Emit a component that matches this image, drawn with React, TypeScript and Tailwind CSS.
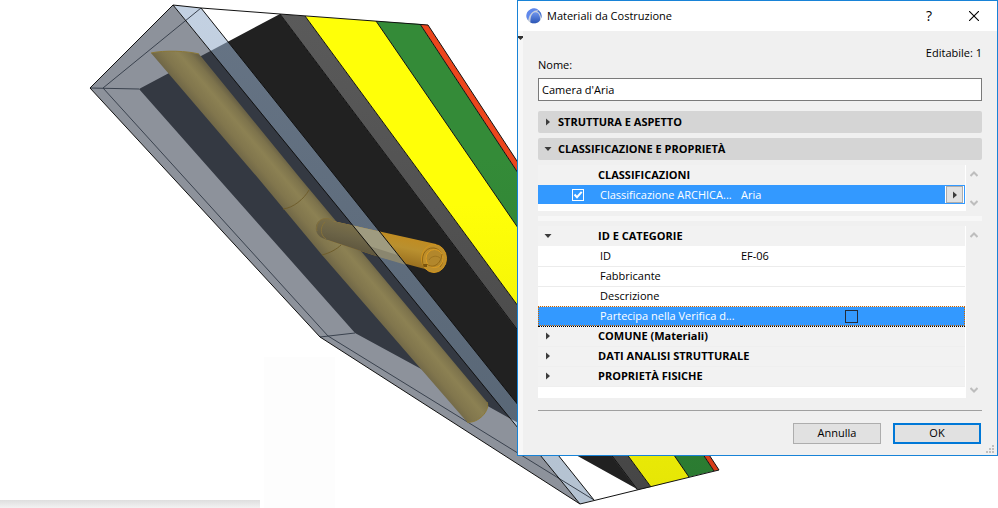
import { useState } from "react"

interface ArrowProps {
  open?: boolean
}

interface PropertyRow {
  id: string
  label: string
  value: string
}

const properties: PropertyRow[] = [
  { id: "id", label: "ID", value: "EF-06" },
  { id: "maker", label: "Fabbricante", value: "" },
  { id: "description", label: "Descrizione", value: "" }
]

const groups = ["COMUNE (Materiali)", "DATI ANALISI STRUTTURALE", "PROPRIETÀ FISICHE"]

function Arrow({ open }: ArrowProps) {
  return (
    <svg viewBox="0 0 8 8" className="block h-2 w-2 shrink-0" aria-hidden="true">
      <path d={open ? "M0.5 2h7L4 6z" : "M2 0.5v7L6 4z"} fill="#3c3c3c" />
    </svg>
  )
}

function Chevron({ down }: { down?: boolean }) {
  return (
    <svg viewBox="0 0 8 8" className="block h-2 w-2" aria-hidden="true">
      <path d={down ? "M0.5 2L4 5.5L7.5 2" : "M0.5 6L4 2.5L7.5 6"} fill="none" stroke="#bdbdbd" strokeWidth="2" />
    </svg>
  )
}

function Scroller() {
  return (
    <div className="flex w-4 flex-col items-center justify-between pt-1 pb-[3px]">
      <button type="button" aria-label="Su" className="py-px"><Chevron /></button>
      <button type="button" aria-label="Giù" className="py-px"><Chevron down /></button>
    </div>
  )
}

function Logo() {
  return (
    <svg viewBox="0 0 16 16" className="h-4 w-4" aria-hidden="true">
      <defs>
        <linearGradient id="logo" x1="0" y1="0" x2="0" y2="1">
          <stop offset="0" stopColor="#6f95ee" />
          <stop offset="1" stopColor="#2b55b4" />
        </linearGradient>
      </defs>
      <circle cx="8" cy="8" r="7.6" fill="#c9d0dd" />
      <path d="M0.6 9.5A7.500 7.500 0 0 1 13 2.400C8 1.800 3.500 5 2.200 12.400A7 7 0 0 1 0.600 9.500z" fill="#5f88ec" />
      <path d="M4.400 14.400C4.200 8.500 6 4.600 9.300 4.200C12.500 4 14.200 7.500 14.200 12.200A7.600 7.600 0 0 1 4.400 14.400z" fill="url(#logo)" />
      <path d="M12.600 2.200A7.600 7.600 0 0 1 15.200 10.500C14.900 7 13.600 4.600 11.200 3.200z" fill="#4672d2" />
    </svg>
  )
}

function WallModel() {
  return (
    <svg viewBox="0 0 998 508" className="block h-auto w-full" role="img" aria-label="Modello 3D">
      <defs>
        <linearGradient id="pipe" gradientUnits="userSpaceOnUse" x1="242" y1="160" x2="268" y2="138">
          <stop offset="0" stopColor="#706747" />
          <stop offset="0.25" stopColor="#81764d" />
          <stop offset="0.6" stopColor="#8c8153" />
          <stop offset="0.85" stopColor="#7d734c" />
          <stop offset="1" stopColor="#696145" />
        </linearGradient>
        <linearGradient id="branch" gradientUnits="userSpaceOnUse" x1="384" y1="232" x2="378" y2="258">
          <stop offset="0" stopColor="#c08c22" />
          <stop offset="0.4" stopColor="#b9902f" />
          <stop offset="1" stopColor="#9a7020" />
        </linearGradient>
        <linearGradient id="branchDark" gradientUnits="userSpaceOnUse" x1="350" y1="224" x2="344" y2="248">
          <stop offset="0" stopColor="#7a6f49" />
          <stop offset="0.5" stopColor="#6c6447" />
          <stop offset="1" stopColor="#5f573e" />
        </linearGradient>
        <linearGradient id="yellow" x1="0" y1="0" x2="0" y2="1">
          <stop offset="0.4" stopColor="#ffff08" />
          <stop offset="1" stopColor="#e6e606" />
        </linearGradient>
        <linearGradient id="green" x1="0" y1="0" x2="0" y2="1">
          <stop offset="0.3" stopColor="#348b38" />
          <stop offset="1" stopColor="#2b7b31" />
        </linearGradient>
        <linearGradient id="red" x1="0" y1="0" x2="0" y2="1">
          <stop offset="0.3" stopColor="#ec461c" />
          <stop offset="1" stopColor="#d83c18" />
        </linearGradient>
        <linearGradient id="grey" x1="0" y1="0" x2="0" y2="1">
          <stop offset="0" stopColor="#5a5a5a" />
          <stop offset="1" stopColor="#464646" />
        </linearGradient>
        <linearGradient id="strip" x1="0" y1="0" x2="0" y2="1">
          <stop offset="0" stopColor="#98b0cd" />
          <stop offset="1" stopColor="#7e96b0" />
        </linearGradient>
        <linearGradient id="floor" x1="0" y1="0" x2="0" y2="1">
          <stop offset="0" stopColor="#dedede" />
          <stop offset="1" stopColor="#f2f2f2" />
        </linearGradient>
        <clipPath id="behindGlass">
          <path d="M173 5L580 504H200V5z" />
        </clipPath>
        <clipPath id="insideStrip">
          <path d="M173 5L201 8L594 500L580 504z" />
        </clipPath>
      </defs>

      <rect x="0" y="500" width="260" height="8" fill="url(#floor)" />
      <rect x="264" y="357" width="71" height="151" fill="#fdfdfd" />

      {/* wall layers */}
      <path d="M280 14L139 89L355 333L423 370L637 489z" fill="#212121" />
      <path d="M280 14L305 16L651 487L637 490z" fill="url(#grey)" />
      <path d="M305 16L376 21L689 477L651 487z" fill="url(#yellow)" />
      <path d="M376 21L420 24L714 471L689 477z" fill="url(#green)" />
      <path d="M420 24L428 25L719 470L714 471z" fill="url(#red)" />

      {/* air gap */}
      <path d="M90 88L173 5L580 504L320 337z" fill="#414958" fillOpacity="0.6" />
      <path d="M173 5L201 8L594 500L580 504z" fill="url(#strip)" fillOpacity="0.58" />
      <path
        d="M201 8L103 88L328 336L594 500M90 88L139 89M320 337L355 333"
        fill="none"
        stroke="#3a424e"
        strokeWidth="1"
      />

      {/* main pipe */}
      <path d="M151 53C164 50 188 51 199 54L300 178L487 402C491 410 478 424 467 422L322 255L258 178z" fill="url(#pipe)" />
      <path d="M151 53C164 50 188 51 199 54M487 402C491 410 478 424 467 422" fill="none" stroke="#8b7837" strokeWidth="1" />
      <path d="M283 209C293 208 304 199 309 190M322 255C330 253 337 249 341 245" fill="none" stroke="#6f5d2c" strokeWidth="1" />

      {/* branch pipe */}
      <path d="M333 221L382 232L436 244V272L373 255L328 240z" fill="url(#branch)" />
      <g clipPath="url(#insideStrip)">
        <path d="M333 221L382 232L436 244V272L373 255L328 240z" fill="#9f9b80" />
        <path d="M328 240L373 255L423 270V263L328 233z" fill="#8a866f" />
      </g>
      <path
        d="M328 218C318 218 315 225 316 230C317 236 323 239 328 240L373 255L423 270V241L382 232L333 221z"
        fill="url(#branchDark)"
        clipPath="url(#behindGlass)"
      />
      <path d="M332 220C321 215 315 224 317 231M325 222C319 228 321 236 326 239" fill="none" stroke="#85713a" strokeWidth="1" />
      <ellipse cx="434" cy="258.500" rx="12.500" ry="14" fill="#bd8e2c" stroke="#d2951c" strokeWidth="1" />
      <path d="M424 267C420 258 424 247 434 248C443 249 445 262 440 267" fill="none" stroke="#946813" strokeWidth="1" />
      <ellipse cx="434.500" cy="258.500" rx="8.500" ry="9" fill="#b2872c" stroke="#dc9d22" strokeWidth="1" />
      <path d="M427 264C432 269 441 265 442 254" fill="none" stroke="#946813" strokeWidth="1" />
      <path d="M429 260C431 256 437 255 440 258" fill="none" stroke="#9d7420" strokeWidth="1" />
      <path d="M423 264h4v3h-3z" fill="#7a540e" />

      <path
        d="M90 88L173 5L201 8L280 14L428 25L719 470L637 490L580 504L320 337zM173 5L580 504M201 8L594 500M280 14L637 489M305 16L651 487M376 21L689 477M420 24L714 471"
        fill="none"
        stroke="#111"
        strokeWidth="1"
      />
    </svg>
  )
}

function ClassificationList() {
  const [checked, setChecked] = useState(true)

  return (
    <div className="mt-[5px] flex">
      <div className="flex-1 border-r border-white bg-white pb-[7px]">
        <table className="w-full table-fixed border-collapse">
          <colgroup>
            <col className="w-15" />
            <col className="w-[143px]" />
            <col />
          </colgroup>
          <tbody>
            <tr className="h-5 bg-[#f2f2f2]">
              <td />
              <th colSpan={2} className="p-0 text-left font-bold">CLASSIFICAZIONI</th>
            </tr>
            <tr className="h-[19px] bg-[#3399ff] text-white">
              <td className="p-0">
                <span className="ml-[34px] grid h-3 w-3">
                  <input
                    id="classification"
                    type="checkbox"
                    checked={checked}
                    onChange={e => setChecked(e.target.checked)}
                    className="col-start-1 row-start-1 h-3 w-3 appearance-none border border-white"
                  />
                  {checked && (
                    <svg viewBox="0 0 12 12" className="pointer-events-none col-start-1 row-start-1 h-3 w-3" aria-hidden="true">
                      <path d="M2.500 5.500L5 8.200L9.700 2.800" fill="none" stroke="#fff" strokeWidth="2" />
                    </svg>
                  )}
                </span>
              </td>
              <td className="p-0 pl-0.5 whitespace-nowrap">
                <label htmlFor="classification">Classificazione ARCHICA...</label>
              </td>
              <td className="p-0">
                <div className="flex items-center justify-between">
                  <span>Aria</span>
                  <span className="mr-px flex border-x border-white bg-white">
                    <button
                      type="button"
                      aria-label="Scegli classificazione"
                      className="flex h-[17px] w-[17px] items-center justify-center border border-[#adadad] bg-[#e1e1e1]"
                    >
                      <Arrow />
                    </button>
                  </span>
                </div>
              </td>
            </tr>
          </tbody>
        </table>
      </div>
      <Scroller />
    </div>
  )
}

function PropertyList() {
  const [collision, setCollision] = useState(false)

  return (
    <div className="mt-[5px] flex">
      <div className="flex-1 border-r border-white bg-white pb-[11px]">
        <table className="w-full table-fixed border-collapse">
          <colgroup>
            <col className="w-15" />
            <col className="w-[143px]" />
            <col />
          </colgroup>
          <tbody>
            <tr className="h-5 bg-[#f2f2f2]">
              <td className="p-0">
                <button type="button" aria-label="Chiudi gruppo" className="ml-1.5 block"><Arrow open /></button>
              </td>
              <th colSpan={2} className="p-0 text-left font-bold">ID E CATEGORIE</th>
            </tr>
            {properties.map(row => (
              <tr key={row.id} className="h-5 border-b border-[#ececec]">
                <td />
                <td className="p-0 pl-0.5">{row.label}</td>
                <td className="p-0">{row.value}</td>
              </tr>
            ))}
            <tr className="h-5 border-b border-dotted border-black bg-[#3399ff] text-white outline-1 -outline-offset-1 outline-dotted outline-[#cc6600]">
              <td />
              <td className="p-0 pl-0.5 whitespace-nowrap">
                <label htmlFor="collision">Partecipa nella Verifica d...</label>
              </td>
              <td className="p-0 pr-1">
                <input
                  id="collision"
                  type="checkbox"
                  checked={collision}
                  onChange={e => setCollision(e.target.checked)}
                  className="mx-auto block h-[13px] w-[13px] appearance-none border border-[#222c3a] checked:bg-[#222c3a]"
                />
              </td>
            </tr>
            {groups.map(name => (
              <tr key={name} className="h-5 border-b border-[#efefef] bg-[#f2f2f2]">
                <td className="p-0">
                  <button type="button" aria-label={name} className="ml-1.5 block"><Arrow /></button>
                </td>
                <th colSpan={2} className="p-0 text-left font-bold">{name}</th>
              </tr>
            ))}
          </tbody>
        </table>
      </div>
      <Scroller />
    </div>
  )
}

function MaterialDialog() {
  const [name, setName] = useState("Camera d'Aria")

  return (
    <section
      role="dialog"
      aria-labelledby="dialog-title"
      className="absolute top-0 right-0 w-[481px] border border-[#1883d7] bg-[#f0f0f0]"
    >
      <header className="flex h-[30px] items-center bg-white pr-[17px] pl-2">
        <Logo />
        <h1 id="dialog-title" className="ml-[5px] flex-1">Materiali da Costruzione</h1>
        <button type="button" aria-label="Aiuto" className="mr-9 text-[14px]">?</button>
        <button type="button" aria-label="Chiudi" className="p-px">
          <svg viewBox="0 0 10 10" className="h-2.5 w-2.5" aria-hidden="true">
            <path d="M0 0L10 10M10 0L0 10" stroke="#000" strokeWidth="1.100" />
          </svg>
        </button>
      </header>

      <div className="flex">
        <div className="w-[5px] bg-[#f7f7f7] pt-[5px]">
          <svg viewBox="0 0 5 4" className="block h-1 w-[5px]" aria-hidden="true">
            <path d="M0 0h5v1.500L2.500 4L0 1.500z" fill="#333" />
          </svg>
        </div>

        <div className="flex-1 pt-3.5 pr-[15px] pb-[11px] pl-[15px]">
          <p className="text-right leading-4">Editabile: 1</p>
          <label htmlFor="name" className="-mt-1 block leading-4">Nome:</label>
          <input
            id="name"
            value={name}
            onChange={e => setName(e.target.value)}
            className="mt-[5px] block h-[23px] w-full border border-[#7a7a7a] bg-white px-[3px] outline-none"
          />

          <button type="button" className="mt-2.5 flex h-[22px] w-full items-center gap-1.5 rounded-xs bg-[#d5d5d5] pl-1.5 font-bold">
            <Arrow />
            STRUTTURA E ASPETTO
          </button>
          <button type="button" className="mt-[5px] flex h-[22px] w-full items-center gap-1.5 rounded-xs bg-[#d5d5d5] pl-1.5 font-bold">
            <Arrow open />
            CLASSIFICAZIONE E PROPRIETÀ
          </button>

          <ClassificationList />
          <div className="mt-[5px] h-[5px] bg-[#f7f7f7]" />
          <PropertyList />

          <div className="mt-3 border-t border-[#a0a0a0]" />
          <div className="mt-3 flex justify-end gap-3 pr-px">
            <button type="button" className="h-[21px] w-[88px] border border-[#adadad] bg-[#e1e1e1]">Annulla</button>
            <button type="button" className="h-[21px] w-[88px] border-2 border-[#0078d7] bg-[#e1e1e1]">OK</button>
          </div>
        </div>
      </div>

      <svg viewBox="0 0 8 8" className="absolute right-[3px] bottom-0.5 h-2 w-2" aria-hidden="true">
        <path d="M6 0h2v2H6zM3 3h2v2H3zM6 3h2v2H6zM0 6h2v2H0zM3 6h2v2H3zM6 6h2v2H6z" fill="#bfbfbf" />
      </svg>
    </section>
  )
}

export default function App() {
  return (
    <main className="relative bg-white font-['Open_Sans','Noto_Sans',sans-serif] text-[11px] leading-[14px] text-black">
      <WallModel />
      <MaterialDialog />
    </main>
  )
}
